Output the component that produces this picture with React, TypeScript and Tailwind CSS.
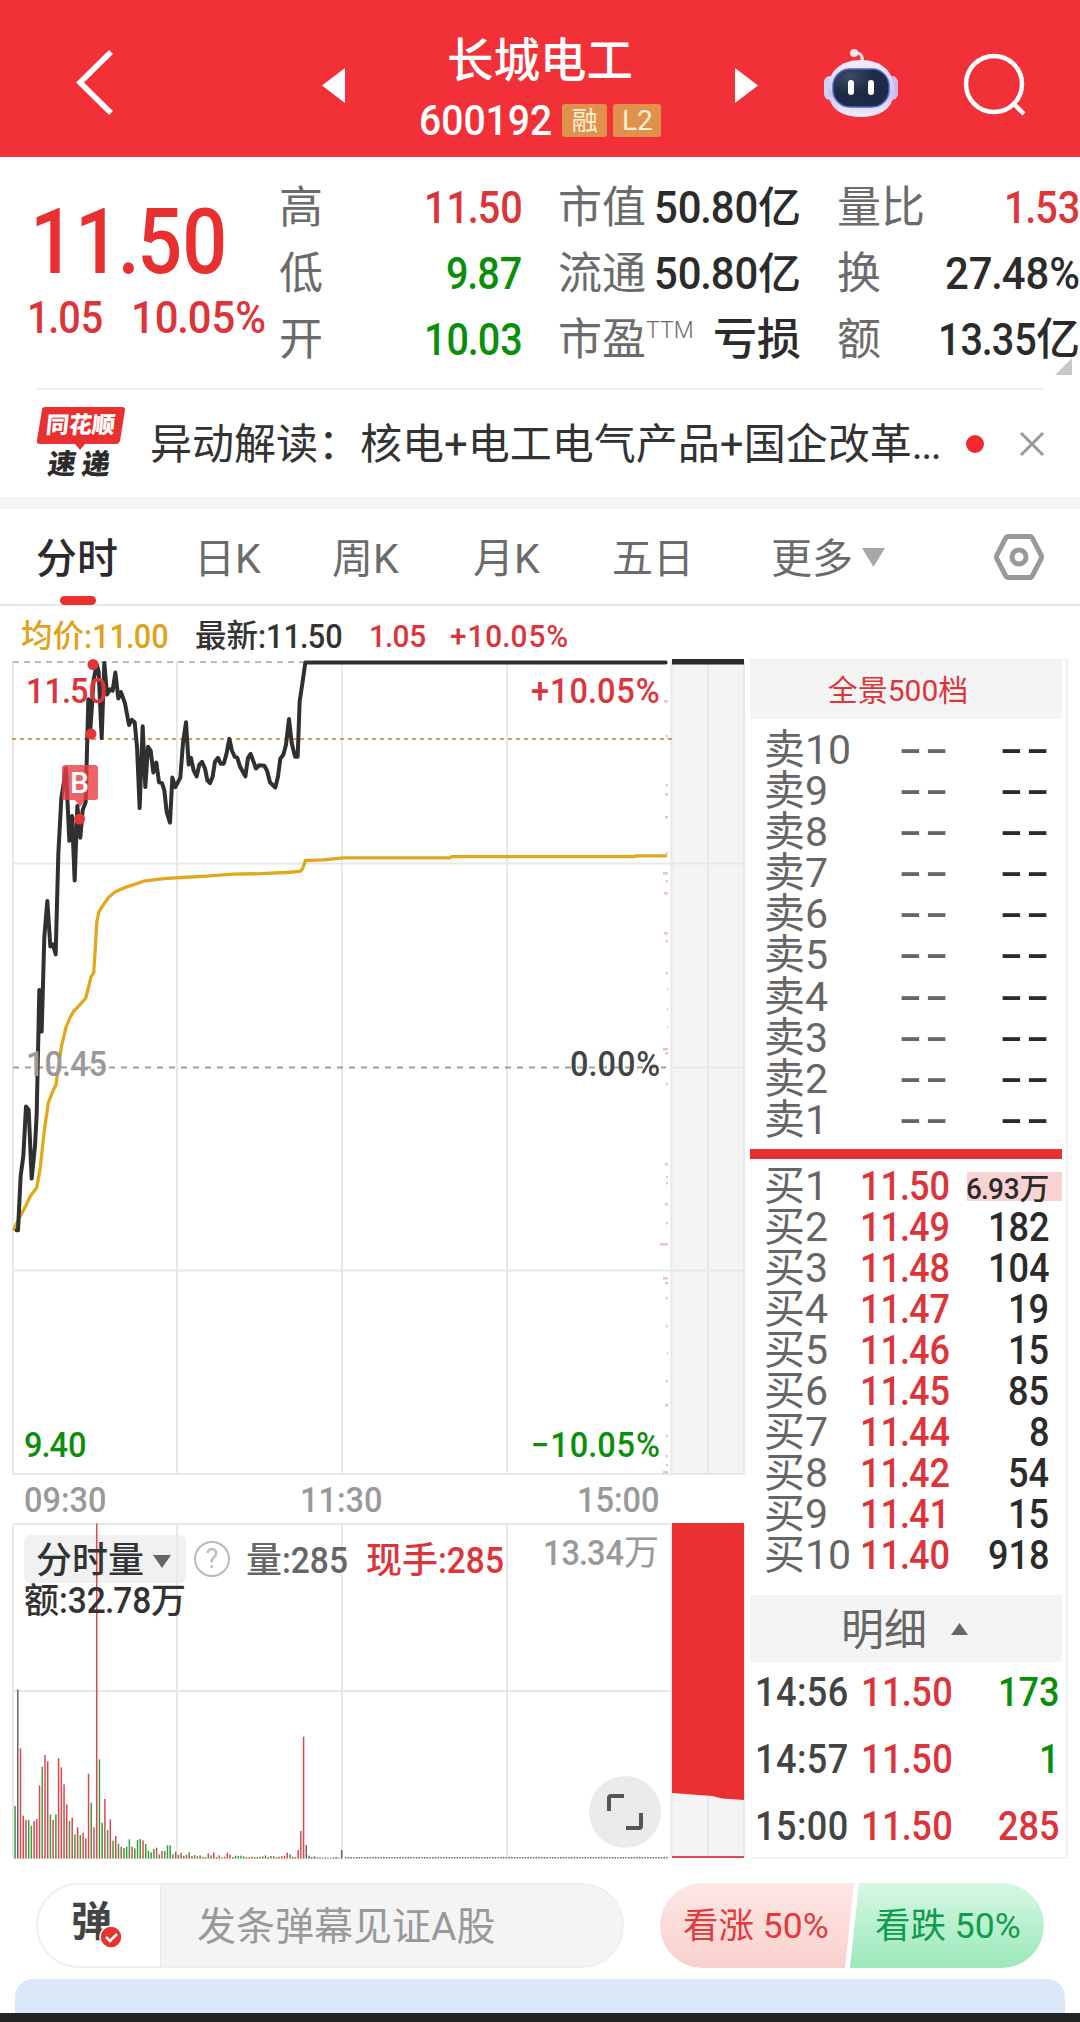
import type { ReactNode } from "react";
import clsx from "clsx";

const RED = "#e93030";

// advance widths of the number glyphs, in em
const ADVANCE: Record<string, number> = {
  ".": 0.22,
  ":": 0.265,
  "%": 0.735,
  "+": 0.557,
  "−": 0.56,
  " ": 0.25,
};

interface NumProps {
  children: string;
  className?: string;
  wide?: boolean;
}

// Condensed figures, the box is as wide as the squeezed text
function Num({ children, className, wide }: NumProps) {
  const k = wide ? 0.93 : 0.88;
  const em = [...children].reduce((sum, c) => sum + (ADVANCE[c] ?? 0.566), 0);
  const [head, tail] = children.split(".");
  return (
    <span className={clsx("inline-block whitespace-nowrap font-medium", className)} style={{ width: `${em * k}em` }}>
      <span className={clsx("inline-block origin-left", wide ? "scale-x-[.93]" : "scale-x-[.88]")}>
        {head}
        {tail !== undefined && <span className="-mx-[.03em]">.</span>}
        {tail}
      </span>
    </span>
  );
}

function Robot() {
  return (
    <svg className="h-[70px] w-[76px]" viewBox="0 0 76 70">
      <defs>
        <linearGradient id="shell" x1="0" y1="0" x2="0" y2="1">
          <stop offset="0" stopColor="#f4efff" />
          <stop offset="0.6" stopColor="#c9c4f6" />
          <stop offset="1" stopColor="#f3edfb" />
        </linearGradient>
        <radialGradient id="visor" cx="0.3" cy="0.2" r="0.9">
          <stop offset="0" stopColor="#3d4c66" />
          <stop offset="0.5" stopColor="#1d2b45" />
          <stop offset="1" stopColor="#1b2a4c" />
        </radialGradient>
      </defs>
      <path d="M39 14c1-6-1-9-6-9" fill="none" stroke="#f6dfe8" strokeWidth="3" />
      <circle cx="31" cy="5" r="4" fill="#fbe6ec" />
      <rect x="1" y="28" width="12" height="24" rx="6" fill="#d7cdf3" />
      <rect x="63" y="28" width="12" height="24" rx="6" fill="#cdb9ef" />
      <path d="M38 12c21 0 33 12 33 30S58 69 38 69 5 60 5 42s12-30 33-30z" fill="url(#shell)" />
      <rect x="10" y="21" width="56" height="38" rx="17" fill="url(#visor)" stroke="#5a63b8" strokeWidth="1.5" />
      <rect x="25" y="32" width="6" height="15" rx="3" fill="#fff" />
      <rect x="45" y="32" width="6" height="15" rx="3" fill="#fff" />
    </svg>
  );
}

function Header() {
  return (
    <header className="flex h-[157px] bg-[#f13137] text-white">
      <svg className="mt-[50px] ml-[75px] h-[65px] w-[40px]" viewBox="0 0 40 65" fill="none" stroke="#fff" strokeWidth="5.5">
        <path d="M36 2L5 32.500L36 63" />
      </svg>
      <svg className="mt-[68px] ml-[207px] h-[35px] w-[23px]" viewBox="0 0 23 35">
        <path d="M23 0v35L0 17.500z" fill="#fff" />
      </svg>
      <div className="mt-[34px] flex w-[390px] flex-col items-center">
        <div className="h-[54px] text-[46.5px] leading-[54px] font-medium">长城电工</div>
        <div className="mt-[15px] flex h-[35px] items-center">
          <Num wide className="text-[42px] leading-[37px]">600192</Num>
          <span className="ml-[11px] flex h-[33px] w-[45px] items-center justify-center rounded-[3px] bg-[#e2914d] text-[26px] leading-none text-[#fff1d4]">
            融
          </span>
          <span className="ml-[6px] flex h-[33px] w-[48px] items-center justify-center rounded-[3px] bg-[#e2914d] text-[28px] leading-none text-[#fff1d4]">
            L2
          </span>
        </div>
      </div>
      <svg className="mt-[68px] h-[35px] w-[23px]" viewBox="0 0 23 35">
        <path d="M0 0v35L23 17.500z" fill="#fff" />
      </svg>
      <div className="mt-[48px] ml-[65px]">
        <Robot />
      </div>
      <svg className="mt-[52px] ml-[63px] h-[64px] w-[66px]" viewBox="0 0 66 64" fill="none" stroke="#fff" strokeWidth="4.500">
        <circle cx="32" cy="32" r="28" />
        <path d="M51 51l11 11" />
      </svg>
    </header>
  );
}

interface StatProps {
  label: ReactNode;
  children: ReactNode;
  className?: string;
}

function Stat({ label, children, className }: StatProps) {
  return (
    <div className="flex h-[66px] items-center justify-between text-[44px] leading-[66px] whitespace-nowrap">
      <span className="text-[#6b6b6b]">{label}</span>
      <span className={clsx("flex text-[45px] font-medium", className)}>{children}</span>
    </div>
  );
}

function Quote() {
  return (
    <section className="relative flex h-[233px] pt-[18px]">
      <div className="w-[279px] text-[#e93030]">
        <Num className="mt-[22px] ml-[30px] h-[92px] text-[90px] leading-[92px]">11.50</Num>
        <div className="-mt-px flex pl-[27px] text-[45px] leading-[60px] text-[#dd343a]">
          <Num>1.05</Num>
          <Num wide className="ml-[28px]">10.05%</Num>
        </div>
      </div>
      <div className="w-[243px]">
        <Stat label="高" className="text-[#dd343a]"><Num>11.50</Num></Stat>
        <Stat label="低" className="text-[#0a8f0a]"><Num>9.87</Num></Stat>
        <Stat label="开" className="text-[#0a8f0a]"><Num>10.03</Num></Stat>
      </div>
      <div className="ml-[36px] w-[243px] text-[#2b2b2b]">
        <Stat label="市值"><Num wide>50.80</Num><i className="text-[43px] not-italic">亿</i></Stat>
        <Stat label="流通"><Num wide>50.80</Num><i className="text-[43px] not-italic">亿</i></Stat>
        <Stat label={<span className="flex">市盈<span className="-mt-[9px] h-[66px] text-[23px] font-light">TTM</span></span>}>
          <i className="text-[44px] not-italic">亏损</i>
        </Stat>
      </div>
      <div className="ml-[36px] w-[243px] text-[#2b2b2b]">
        <Stat label="量比" className="text-[#e0333a]"><Num>1.53</Num></Stat>
        <Stat label="换"><Num wide>27.48%</Num></Stat>
        <Stat label="额"><Num>13.35</Num><i className="text-[44px] not-italic">亿</i></Stat>
      </div>
      <svg className="absolute top-[201px] left-[1055px] h-[17px] w-[17px]" viewBox="0 0 17 17">
        <path d="M17 0v17H0z" fill="#c8c8c8" />
      </svg>
      <div className="absolute right-[35px] bottom-0 left-[35px] h-[2px] bg-[#f0f0f0]" />
    </section>
  );
}

function News() {
  return (
    <section className="flex h-[107px] items-center">
      <div className="relative ml-[36px] h-[78px] w-[114px]">
        <svg className="absolute top-[2px] left-0 h-[44px] w-[90px]" viewBox="0 0 90 44">
          <path d="M9 0h77q3 0 3 3l-5 31q-1 3-4 3H49l-5 6-5-6H4q-4 0-3-4l5-30q0-3 3-3z" fill={RED} />
        </svg>
        <div className="absolute top-[6px] left-[10px] -skew-x-6 text-[23px] leading-[30px] font-black whitespace-nowrap text-white">
          同花顺
        </div>
        <div className="absolute top-[43px] left-[12px] -skew-x-8 text-[28px] leading-[34px] font-black tracking-[6px] whitespace-nowrap text-[#2b2b2b]">
          速递
        </div>
      </div>
      <div className="w-[790px] pt-[3px] text-[42px] leading-[60px] whitespace-nowrap text-[#333]">
        异动解读：核电+电工电气产品+国企改革<span className="tracking-[-1.5px]">...</span>
      </div>
      <div className="ml-[26px] size-[18px] rounded-full bg-[#ee2a30]" />
      <svg className="ml-[35px] size-[26px]" viewBox="0 0 26 26" stroke="#999" strokeWidth="3">
        <path d="M2 2l22 22M24 2L2 24" />
      </svg>
    </section>
  );
}

function Tabs() {
  const tabs = [
    { name: "日K", cls: "ml-[74px] w-[138px]" },
    { name: "周K", cls: "w-[141px]" },
    { name: "月K", cls: "w-[139px]" },
    { name: "五日", cls: "w-[159px]" },
    { name: "更多", cls: "w-[91px]" },
  ];
  return (
    <nav className="flex h-[97px] border-b-2 border-[#e8e8e8] text-[41px] leading-[101px] text-[#6b6b6b]">
      <div className="relative ml-[36px] w-[84px] font-medium text-[#2b2b2b]">
        分时
        <span className="absolute bottom-[-1px] left-[24px] h-[9px] w-[36px] rounded-full bg-[#e93030]" />
      </div>
      {tabs.map((t) => (
        <div key={t.name} className={clsx("whitespace-nowrap", t.cls)}>{t.name}</div>
      ))}
      <svg className="mt-[39px] h-[19px] w-[23px]" viewBox="0 0 23 19">
        <path d="M0 0h23L11.500 19z" fill="#a8a8a8" />
      </svg>
      <svg className="mt-[22px] ml-[108px] h-[52px] w-[52px]" viewBox="0 0 52 52" fill="none" stroke="#999" strokeWidth="5">
        <path d="M15.500 5.500h21q2 0 3 2L48 24q1 2 0 4l-8.500 16.500q-1 2-3 2h-21q-2 0-3-2L4 28q-1-2 0-4l8.500-16.500q1-2 3-2z" />
        <circle cx="26" cy="26" r="7" />
      </svg>
    </nav>
  );
}

const PRICE =
  "50,1493 54,1493 62,1355 70,1305 78,1180 86,1188 95,1362 105,1280 110,1200 118,885 125,990 133,750 142,660 151,775 159,770 167,795 175,540 184,400 198,325 208,508 216,445 224,608 232,420 241,500 248,430 257,410 265,150 270,240 281,100 290,62 296,80 305,248 313,58 321,138 330,125 338,128 346,82 355,148 363,132 375,160 387,215 395,202 404,208 411,270 419,425 428,218 436,372 444,270 452,280 460,335 469,310 477,360 486,362 493,380 500,435 510,462 517,348 526,372 541,348 549,260 558,208 566,315 573,298 581,330 590,345 598,315 606,308 615,325 622,355 630,362 638,345 645,308 654,298 662,313 671,313 679,290 688,250 696,280 704,295 712,298 720,320 736,345 744,298 752,288 768,325 777,317 793,318 801,330 810,360 826,373 834,345 841,300 850,290 858,265 867,200 875,260 885,295 893,295 899,155 908,105 916,57 1997,57";

const AVERAGE =
  "42,1490 60,1458 75,1435 92,1405 110,1385 120,1340 133,1240 145,1170 158,1142 168,1125 175,1080 185,1025 198,980 210,955 222,938 240,922 257,906 265,880 273,852 281,842 286,780 290,715 297,687 310,670 325,652 345,637 375,626 410,616 435,609 500,603 560,600 620,597 700,592 780,591 860,588 900,585 908,578 916,558 970,556 1030,551 1350,551 1355,548 1900,548 1908,546 1997,546";

// chips at the right edge of the chart: [y, width]
const CHIPS = [
  [700, 4], [735, 2], [784, 2], [793, 3], [816, 3], [852, 2], [872, 5], [880, 2], [892, 4], [932, 4], [940, 2],
  [972, 2], [988, 1], [1008, 1], [1026, 1], [1048, 5], [1052, 3], [1083, 2], [1163, 3], [1176, 2], [1182, 2],
  [1203, 3], [1222, 2], [1243, 8], [1277, 5], [1282, 3], [1297, 2], [1325, 2], [1352, 1], [1380, 2], [1404, 3],
  [1435, 2], [1455, 2], [1464, 2], [1471, 5],
];

function PriceChart() {
  return (
    <div className="relative h-[817px] text-[35px] leading-[42px]">
      <svg className="block h-[817px] w-[745px]" viewBox="0 659 745 817" fill="none">
        <rect x="672" y="663" width="72" height="811" fill="#f4f4f4" />
        <g stroke="#e8e8e8" strokeWidth="2">
          <path d="M13 661V1474M177 661V1474M342 661V1474M507 661V1474M671.500 661V1474M708 661V1474M744 661V1474" />
          <path d="M13 863.500H744M13 1270.500H744M13 1474H744M672 1067.500H744" />
        </g>
        <path d="M13 662H310" stroke="#b3a48c" strokeWidth="1.500" strokeDasharray="6 5" />
        <path d="M12 739H672" stroke="#d29a5e" strokeWidth="2" strokeDasharray="4 4" />
        <path d="M13 1067.500H666" stroke="#a0a0a0" strokeWidth="2" strokeDasharray="6 6" />
        {CHIPS.map(([y, w]) => (
          <rect key={y} x={668 - w} y={y} width={w} height="2.500" fill="#efc2c4" />
        ))}
        <g transform="translate(0 640) scale(.33333 .39541)" strokeLinejoin="round" strokeLinecap="round">
          <polyline points={AVERAGE} stroke="#e2a71c" strokeWidth="3.300" vectorEffect="non-scaling-stroke" />
          <polyline points={PRICE} stroke="#303030" strokeWidth="4" vectorEffect="non-scaling-stroke" />
        </g>
        <rect x="672" y="659" width="72" height="5.500" fill="#2b2b2f" />
        <g fill="#e5353a">
          <circle cx="93" cy="664.500" r="5.500" />
          <circle cx="91" cy="734" r="5.500" />
          <circle cx="79.500" cy="819" r="5.500" />
        </g>
        <path d="M65 765h30q3 0 3 3v29q0 3-3 3H85l-5 7-5-7H65q-3 0-3-3v-29q0-3 3-3z" fill="#ea3c45" fillOpacity=".8" />
      </svg>
      <span className="absolute top-[103px] left-[70px] text-[30px] font-medium text-white">B</span>
      <Num wide className="absolute top-[12px] left-[26px] text-[#dd343a]">11.50</Num>
      <Num wide className="absolute top-[12px] right-[91px] tracking-[1px] text-[#dd343a]">+10.05%</Num>
      <Num wide className="absolute top-[385px] left-[26px] text-[#999]">10.45</Num>
      <Num wide className="absolute top-[385px] right-[89px] tracking-[1px] text-[#444]">0.00%</Num>
      <Num wide className="absolute top-[766px] left-[24px] text-[#0a8f0a]">9.40</Num>
      <Num wide className="absolute top-[766px] right-[91px] tracking-[1px] text-[#0a8f0a]">−10.05%</Num>
    </div>
  );
}

// volume per minute, height in thirds of a pixel
const VOLUME =
  "g158 k508 r331 r129 r116 g116 g99 r113 r119 r220 g276 r311 r292 g133 r116 g133 r302 r274 r223 r163 g113 r123 g73 r94 g71 r78 r61 r255 g168 r94 r1006 g298 g108 r179 g86 r118 g54 r68 g45 r36 g32 g36 g58 r36 g31 g56 g59 r55 g44 g24 g19 g29 r33 g13 r23 g23 g40 g40 r13 g21 r11 r17 g9 r12 g19 r8 g11 r7 g10 r6 g5 r16 g10 r19 r5 r10 g4 r6 r18 r12 g5 g9 g8 g9 g7 r5 r5 r6 g5 r5 g6 r7 g10 r5 g8 g8 r5 r6 r7 r9 r18 g13 r6 g5 r26 r83 r366 k41 k9 k5 k7 k4 k4 k3 k4 k3 k3 k4 k5 k3 k26".split(" ");

const BAR_COLORS: Record<string, string> = { r: "#d8494d", g: "#3f9a3f", k: "#666" };

function VolumeChart() {
  return (
    <div className="relative h-[336px] text-[36px] leading-[42px]">
      <div className="absolute top-[12px] left-[24px] h-[48px] w-[162px] rounded-[6px] bg-[#f1f1f1]" />
      <svg className="relative block h-[336px] w-[745px]" viewBox="0 1523 745 336" fill="none">
        <rect x="672" y="1523" width="72" height="335" fill="#f4f4f4" />
        <g stroke="#e8e8e8" strokeWidth="2">
          <path d="M13 1524V1858M177 1524V1858M342 1524V1858M507 1524V1858M671.500 1524V1858M708 1524V1858M744 1524V1858" />
          <path d="M13 1524H672M13 1691H672" />
        </g>
        {VOLUME.map((v, i) => {
          const h = Number(v.slice(1)) / 3;
          return <rect key={i} x={14.3 + i * 2.722} y={1858.700 - h} width="1.500" height={h} fill={BAR_COLORS[v[0]]} />;
        })}
        <path d="M345 1857.700H668" stroke="#666" strokeWidth="1.500" strokeDasharray="1.500 1.222" />
        <path d="M672 1523h72v277l-22-1.500-10-2.500-40-3z" fill="#eb3032" />
        <path d="M672 1857h72" stroke="#d9494d" strokeWidth="2" />
      </svg>
      <div className="absolute top-[17px] left-[36px] flex items-center text-[36px] font-medium text-[#333]">
        分时量
        <svg className="ml-[9px] h-[13px] w-[18px]" viewBox="0 0 18 13">
          <path d="M0 0h18L9 13z" fill="#666" />
        </svg>
      </div>
      <div className="absolute top-[18px] left-[194px] flex size-[36px] items-center justify-center rounded-full border-[2.5px] border-[#bbb] text-[27px] leading-none text-[#bbb]">
        ?
      </div>
      <div className="absolute top-[17px] left-[246px] font-medium whitespace-nowrap text-[#666]">
        量<Num wide>:285</Num>
      </div>
      <div className="absolute top-[17px] left-[366px] font-medium whitespace-nowrap text-[#dd343a]">
        现手<Num wide>:285</Num>
      </div>
      <div className="absolute top-[10px] right-[86px] text-[35px] whitespace-nowrap text-[#999]">
        <Num wide>13.34</Num>万
      </div>
      <div className="absolute top-[57px] left-[24px] text-[35px] font-medium whitespace-nowrap text-[#333]">
        额<Num wide className="text-[36px]">:32.78</Num>万
      </div>
      <div className="absolute top-[253px] left-[589px] flex size-[72px] items-center justify-center rounded-full bg-[#ebebeb]">
        <svg className="size-[38px]" viewBox="0 0 38 38" fill="none" stroke="#555" strokeWidth="4">
          <path d="M3 18V5q0-2 2-2h13M35 20v13q0 2-2 2H20" />
        </svg>
      </div>
    </div>
  );
}

function Charts() {
  return (
    <div className="w-[745px]">
      <div className="flex h-[53px] pt-[4px] pl-[21px] text-[31.5px] leading-[53px] font-medium text-[#333]">
        <span className="flex w-[174px] text-[#dfa21a]">均价<Num wide className="text-[33px]">:11.00</Num></span>
        <span className="flex w-[174px]">最新<Num wide className="text-[33px]">:11.50</Num></span>
        <span className="w-[81px] text-[#dd343a]"><Num wide className="text-[32px]">1.05</Num></span>
        <Num wide className="text-[32px] tracking-[1px] text-[#dd343a]">+10.05%</Num>
      </div>
      <PriceChart />
      <div className="flex h-[47px] justify-between pr-[86px] pl-[24px] text-[35px] leading-[49px] text-[#999]">
        <Num wide>09:30</Num>
        <Num wide>11:30</Num>
        <Num wide>15:00</Num>
      </div>
      <VolumeChart />
    </div>
  );
}

const BIDS = [
  ["11.50", "6.93万"],
  ["11.49", "182"],
  ["11.48", "104"],
  ["11.47", "19"],
  ["11.46", "15"],
  ["11.45", "85"],
  ["11.44", "8"],
  ["11.42", "54"],
  ["11.41", "15"],
  ["11.40", "918"],
];

const TRADES = [
  { time: "14:56", price: "11.50", qty: "173", up: false },
  { time: "14:57", price: "11.50", qty: "1", up: false },
  { time: "15:00", price: "11.50", qty: "285", up: true },
];

function Dashes({ className }: { className: string }) {
  return (
    <span className={clsx("inline-block w-[50px]", className)}>
      <span className="inline-block origin-left scale-x-[1.65] font-medium tracking-[2px]">--</span>
    </span>
  );
}

function OrderBook() {
  return (
    <div className="mt-[53px] ml-[5px] h-[1200px] w-[318px] border-t border-r-2 border-b-2 border-[#f0f0f0] text-[41px]">
      <div className="h-[59px] w-[312px] bg-[#f4f4f4] pr-[16px] text-center text-[30px] leading-[61px] text-[#e0343a]">全景500档</div>
      <div className="mt-[11px] h-[419px] pl-[14px]">
        {[10, 9, 8, 7, 6, 5, 4, 3, 2, 1].map((n) => (
          <div key={n} className="flex h-[41.1px] leading-[41.1px] text-[#666]">
            <span className="w-[135px]">卖{n}</span>
            <Dashes className="text-[#666]" />
            <Dashes className="ml-[51px] text-[#2b2b2b]" />
          </div>
        ))}
      </div>
      <div className="h-[10px] w-[312px] bg-[#e93030]" />
      <div className="mt-[7px] h-[429px] pl-[14px]">
        {BIDS.map(([price, qty], i) => (
          <div key={price} className="flex h-[41px] w-[298px] leading-[41px] text-[#2b2b2b]">
            <span className="w-[96px] whitespace-nowrap text-[#666]">买{i + 1}</span>
            <Num className="text-[#dd343a]">{price}</Num>
            {i === 0 ? (
              <span className="ml-auto mt-[6px] flex h-[29px] w-[95px] bg-[#f9d3d4] text-[30px] leading-[33px] font-medium whitespace-nowrap">
                <Num wide className="-ml-px text-[30px]">6.93</Num>万
              </span>
            ) : (
              <span className="ml-auto pr-[13px]"><Num>{qty}</Num></span>
            )}
          </div>
        ))}
      </div>
      <div className="flex h-[67px] w-[312px] items-center bg-[#f4f4f4] pl-[91px] text-[43px] leading-[67px] text-[#666]">
        <span className="pt-[4px]">明细</span>
        <svg className="ml-[24px] h-[12px] w-[17px]" viewBox="0 0 17 12">
          <path d="M8.500 0L17 12H0z" fill="#666" />
        </svg>
      </div>
      <div className="w-[309px] pl-[5px]">
        {TRADES.map((t) => (
          <div key={t.time} className="flex h-[67px] leading-[60px]">
            <Num className="tracking-[.5px] text-[#444]">{t.time}</Num>
            <Num className="ml-[15px] tracking-[.5px] text-[#dd343a]">{t.price}</Num>
            <span className={clsx("ml-auto", t.up ? "text-[#dd343a]" : "text-[#0a8f0a]")}><Num>{t.qty}</Num></span>
          </div>
        ))}
      </div>
    </div>
  );
}

function BottomBar() {
  return (
    <div className="flex h-[120px] pt-[24px] pl-[36px]">
      <div className="flex h-[85px] w-[588px] overflow-hidden rounded-full border-2 border-[#efefef] bg-[#f4f4f4]">
        <div className="relative w-[123px] border-r border-[#e8e8e8] bg-white">
          <span className="absolute top-[12px] left-[33px] text-[41px] leading-[50px] font-bold text-[#444]">弹</span>
          <svg className="absolute top-[40px] left-[61px] size-[24px]" viewBox="0 0 24 24">
            <circle cx="12" cy="12" r="11" fill="#e5352f" stroke="#fff" strokeWidth="1.500" />
            <path d="M7 12l4 4 7-7" fill="none" stroke="#fff" strokeWidth="2.500" />
          </svg>
        </div>
        <div className="pl-[36px] text-[39px] leading-[85px] text-[#999]">发条弹幕见证A股</div>
      </div>
      <div className="relative ml-[36px] h-[85px] w-[384px] overflow-hidden rounded-full">
        <svg className="block h-[85px] w-[384px]" viewBox="0 0 384 85">
          <defs>
            <linearGradient id="up" x1="0" y1="0" x2="0" y2="1">
              <stop offset="0" stopColor="#fee8e7" />
              <stop offset="1" stopColor="#f9d0cc" />
            </linearGradient>
            <linearGradient id="down" x1="0" y1="0" x2="0" y2="1">
              <stop offset="0" stopColor="#d6f8e4" />
              <stop offset="1" stopColor="#9be8ba" />
            </linearGradient>
          </defs>
          <path d="M0 0h194l-9 85H0z" fill="url(#up)" />
          <path d="M199 0h185v85H190z" fill="url(#down)" />
        </svg>
        <div className="absolute top-0 left-[23px] text-[35.5px] leading-[87px] whitespace-nowrap text-[#e23b3b]">
          看涨 50%
        </div>
        <div className="absolute top-0 left-[215px] text-[35.5px] leading-[87px] whitespace-nowrap text-[#109c4c]">
          看跌 50%
        </div>
      </div>
    </div>
  );
}

export default function App() {
  return (
    <div className="h-[2022px] w-[1080px] overflow-hidden bg-white font-[Roboto,'Noto_Sans_CJK_SC',sans-serif]">
      <Header />
      <Quote />
      <News />
      <div className="h-[12px] bg-[#f4f4f4]" />
      <Tabs />
      <main className="flex">
        <Charts />
        <OrderBook />
      </main>
      <BottomBar />
      <div className="mx-[15px] h-[34px] rounded-t-[18px] bg-[#dbe8fa]" />
      <div className="h-[9px] bg-[#242427]" />
    </div>
  );
}
